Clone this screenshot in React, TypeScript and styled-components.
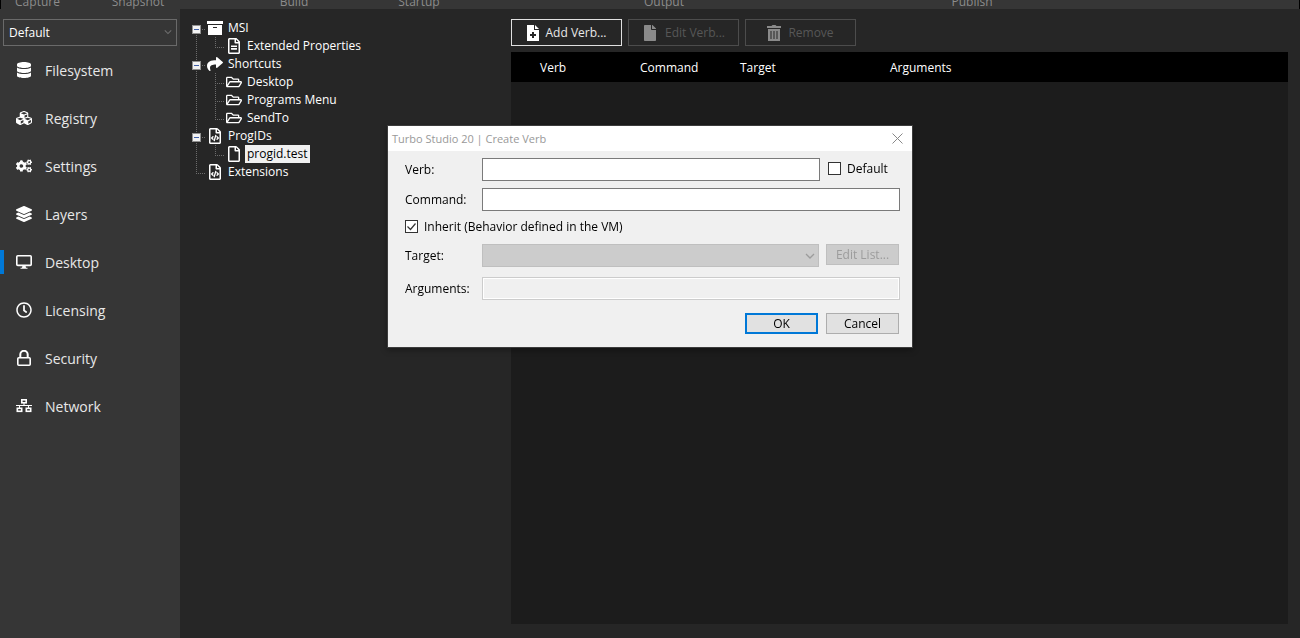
import React from "react";
import styled, { createGlobalStyle, css } from "styled-components";
import {
  FaCogs,
  FaCubes,
  FaDatabase,
  FaFile,
  FaLayerGroup,
  FaRegClock,
  FaRegFile,
  FaRegFileAlt,
  FaRegFileCode,
  FaRegFolderOpen,
  FaShare,
} from "react-icons/fa";

const Global = createGlobalStyle`
  *, *::before, *::after { box-sizing: border-box; }
  body {
    margin: 0;
    background: #262626;
    color: #fff;
    font: 12px/18px "Open Sans", "Noto Sans", sans-serif;
  }
  button, input, select { font: inherit; border-radius: 0; margin: 0; }
`;

/* ---------- icons ---------- */

const DesktopIcon = () => (
  <svg width="16" height="16" viewBox="0 0 16 16" fill="none" stroke="currentColor">
    <rect x="0.8" y="1.8" width="14.4" height="9.6" rx="1" strokeWidth="1.6" />
    <path d="M6.5 11.5h3l.5 2.2h1.5v1.1h-7v-1.1H6z" fill="currentColor" stroke="none" />
  </svg>
);

const LockIcon = () => (
  <svg width="16" height="16" viewBox="0 0 16 16" fill="none" stroke="currentColor" strokeWidth="1.6">
    <rect x="1.8" y="7.8" width="12.4" height="7.4" rx="1" />
    <path d="M4.3 7.5V4.5a3.7 3.7 0 0 1 7.4 0v3" strokeWidth="2" />
  </svg>
);

const NetworkIcon = () => (
  <svg width="16" height="16" viewBox="0 0 16 16" fill="none" stroke="currentColor">
    <rect x="5.8" y="1.8" width="4.4" height="3" strokeWidth="1.6" />
    <path d="M8 5v2.5M0 7.5h16M3.5 7.5V10M12.5 7.5V10" strokeWidth="1" />
    <rect x="1.3" y="10.3" width="4.4" height="3" strokeWidth="1.6" />
    <rect x="10.3" y="10.3" width="4.4" height="3" strokeWidth="1.6" />
  </svg>
);

const ArchiveIcon = () => (
  <svg width="16" height="16" viewBox="0 0 16 16" fill="currentColor">
    <path d="M0 1h16v3H0z" />
    <path d="M1 5h14v10H1zM6 7v1h4V7z" fillRule="evenodd" />
  </svg>
);

const FileAddIcon = () => (
  <svg width="12" height="16" viewBox="0 0 12 16" fill="currentColor">
    <path d="M0 0h7v5h5v11H0zM5 7v2H3v2h2v2h2v-2h2V9H7V7z" fillRule="evenodd" />
    <path d="M8 0l4 4H8z" />
  </svg>
);

const TrashIcon = () => (
  <svg width="14" height="16" viewBox="0 0 14 16" fill="currentColor">
    <path d="M0 1h4.500l1-1h3l1 1H14v2H0z" />
    <path d="M1 4h12v12H1zM3.500 6v8h1V6zM6.500 6v8h1V6zM9.500 6v8h1V6z" fillRule="evenodd" />
  </svg>
);

const ChevronIcon = ({ width }: { width: number }) => (
  <svg width={width} height={width} viewBox="0 0 10 10" fill="none" stroke="currentColor" strokeWidth="1.3">
    <path d="M1 3l4 4 4-4" />
  </svg>
);

/* ---------- page frame ---------- */

const Page = styled.div`
  display: flex;
  flex-direction: column;
  min-height: 100vh;
`;

const Ribbon = styled.header`
  display: flex;
  align-items: flex-end;
  height: 9px;
  overflow: hidden;
  background: #363636;
  border: solid #000;
  border-width: 0 1px;
  color: #8c8c8c;
  line-height: 14px;
`;

const RibbonGroup = styled.span<{ $width: number }>`
  flex: 0 0 ${(p) => p.$width}px;
  text-align: center;
`;

const Workspace = styled.div`
  flex: 1;
  display: flex;
`;

/* ---------- sidebar ---------- */

const Sidebar = styled.aside`
  flex: 0 0 180px;
  padding: 10px 3px 0;
  background: #363636;
`;

const SelectBox = styled.div<{ $inDialog?: boolean }>`
  position: relative;
  color: ${(p) => (p.$inDialog ? "#9c9c9c" : "#6e6e6e")};
  ${(p) => p.$inDialog && "flex: 1;"}

  select {
    display: block;
    width: 100%;
    height: ${(p) => (p.$inDialog ? 23 : 27)}px;
    padding: 0 20px 0 5px;
    appearance: none;
    background: ${(p) => (p.$inDialog ? "#ccc" : "transparent")};
    border: 1px solid ${(p) => (p.$inDialog ? "#bfbfbf" : "#6a6a6a")};
    color: #fff;
    opacity: 1;
  }

  svg {
    position: absolute;
    right: ${(p) => (p.$inDialog ? 4 : 5)}px;
    top: ${(p) => (p.$inDialog ? 7 : 9)}px;
    pointer-events: none;
  }
`;

const Nav = styled.nav`
  display: flex;
  flex-direction: column;
  margin: 0 -3px;
`;

const NavLink = styled.a<{ $active?: boolean }>`
  display: flex;
  align-items: center;
  gap: 13px;
  height: 24px;
  margin: 12px 0;
  padding-left: 12px;
  border-left: 4px solid ${(p) => (p.$active ? "#0078d7" : "transparent")};
  color: #e8e8e8;
  font-size: 14px;
  text-decoration: none;

  svg {
    flex: none;
    color: #fff;
  }
`;

const NavText = styled.span`
  padding-top: 2px;
`;

/* ---------- tree ---------- */

const Tree = styled.ul`
  flex: 0 0 331px;
  margin: 0;
  padding: 10px 0 0 7px;
  list-style: none;
`;

const TreeRow = styled.li`
  display: flex;
  height: 18px;
`;

type Line = "start" | "through" | "branch" | "end" | "none";

const dotsDown = "repeating-linear-gradient(to bottom, #6c6c6c 0 1px, transparent 1px 2px)";
const dotsAcross = "repeating-linear-gradient(to right, #6c6c6c 0 1px, transparent 1px 2px)";

const Guide = styled.span<{ $line: Line }>`
  flex: 0 0 19px;
  height: 18px;
  padding: 6px 0 0 5px;
  background-repeat: no-repeat;
  ${(p) =>
    p.$line !== "none" &&
    css`
      background-image: ${dotsDown}, ${p.$line === "through" ? "none" : dotsAcross};
      background-position: 9px ${p.$line === "start" ? 10 : 0}px, 9px 10px;
      background-size: 1px ${p.$line === "end" ? 10 : 18}px, 10px 1px;
    `}
`;

const Expander = styled.button`
  display: block;
  width: 9px;
  height: 9px;
  padding: 0;
  border: 1px solid #919191;
  background: linear-gradient(#3f5fa8, #3f5fa8) center / 5px 1px no-repeat, #f2f2f2;
`;

const TreeIcon = styled.span`
  display: flex;
  flex: 0 0 19px;
  align-items: center;
  padding-left: 1px;
`;

const TreeLabel = styled.span<{ $selected?: boolean }>`
  margin-left: 1px;
  padding: 0 2px;
  white-space: nowrap;
  ${(p) => p.$selected && "background: #f0f0f0; color: #000;"}
`;

/* ---------- verbs panel ---------- */

const Panel = styled.main`
  flex: 1;
  display: flex;
  flex-direction: column;
  padding: 10px 12px 14px 0;
`;

const Toolbar = styled.div`
  display: flex;
  gap: 6px;
  margin-bottom: 6px;
`;

const ToolButton = styled.button`
  display: flex;
  align-items: center;
  justify-content: center;
  gap: 7px;
  width: 111px;
  height: 27px;
  padding: 0;
  background: transparent;
  border: 1px solid #e0e0e0;
  color: #e8e8e8;
  white-space: nowrap;

  svg { color: #fff; }

  &:disabled {
    border-color: #4c4c4c;
    color: #575757;
    svg { color: #8a8a8a; }
  }
`;

const TableArea = styled.div`
  flex: 1;
  background: #1c1c1c;
`;

const VerbTable = styled.table`
  width: 100%;
  table-layout: fixed;
  border-collapse: collapse;
`;

const HeadCell = styled.th<{ $width?: number; $first?: boolean }>`
  ${(p) => p.$width && `width: ${p.$width}px;`}
  height: 30px;
  padding: 2px 0 0 ${(p) => (p.$first ? 29 : 4)}px;
  background: #000;
  font-weight: 400;
  text-align: left;
`;

/* ---------- dialog ---------- */

const Overlay = styled.div`
  position: fixed;
  inset: 0;
  display: flex;
  align-items: flex-start;
  justify-content: center;
  padding-top: 125px;
`;

const Dialog = styled.section`
  width: 526px;
  border: 1px solid #3c3c3c;
  background: #f0f0f0;
  color: #000;
  box-shadow: 0 2px 6px rgba(0, 0, 0, 0.35);
`;

const TitleBar = styled.header`
  display: flex;
  align-items: center;
  justify-content: space-between;
  height: 25px;
  padding: 0 9px 0 4px;
  background: #fff;
  color: #999;
`;

const Title = styled.h1`
  margin: 0;
  font-size: 11px;
  font-weight: 400;
`;

const CloseButton = styled.button`
  display: flex;
  padding: 0;
  border: 0;
  background: none;
  color: #888;
`;

const Form = styled.form`
  display: flex;
  flex-direction: column;
  padding: 7px 12px 13px 17px;
`;

const FormRow = styled.div<{ $after: number; $gap?: number; $inset?: boolean }>`
  display: flex;
  align-items: flex-start;
  gap: ${(p) => p.$gap ?? 0}px;
  margin-bottom: ${(p) => p.$after}px;
  ${(p) => p.$inset && "padding-right: 1px;"}
`;

const Field = styled.div`
  flex: 1;
  display: flex;
  align-items: center;
`;

const FieldLabel = styled.label`
  flex: 0 0 77px;
`;

const TextInput = styled.input`
  flex: 1;
  min-width: 0;
  height: 23px;
  padding: 0 3px;
  background: #fff;
  border: 1px solid #7a7a7a;

  &:disabled {
    background: #f0f0f0;
    border-color: #ccc;
    box-shadow: inset 0 0 0 1px #fff;
  }
`;

const CheckLabel = styled.label<{ $width?: number }>`
  display: flex;
  align-items: center;
  gap: 6px;
  height: ${(p) => (p.$width ? 21 : 19)}px;
  ${(p) => p.$width && `flex: 0 0 ${p.$width}px;`}
`;

const tick = `url("data:image/svg+xml,%3Csvg xmlns='http://www.w3.org/2000/svg' viewBox='0 0 11 11'%3E%3Cpath d='M1.500 5.500l3 3 5-6' fill='none' stroke='%23333' stroke-width='1.200'/%3E%3C/svg%3E")`;

const CheckBox = styled.input`
  flex: none;
  width: 13px;
  height: 13px;
  appearance: none;
  background: #fff;
  border: 1px solid #333;

  &:checked { background-image: ${tick}; }
`;

const DialogButton = styled.button<{ $default?: boolean }>`
  flex: 0 0 73px;
  height: 21px;
  padding: 0;
  line-height: 17px;
  background: #e1e1e1;
  border: ${(p) => (p.$default ? "2px solid #0078d7" : "1px solid #adadad")};
  color: #000;

  &:disabled {
    background: #ccc;
    border-color: #bfbfbf;
    color: #9c9c9c;
  }
`;

const Actions = styled.div`
  display: flex;
  justify-content: flex-end;
  gap: 8px;
  padding-right: 1px;
`;

/* ---------- data ---------- */

const ribbonGroups: [string, number][] = [
  ["Capture", 73],
  ["Snapshot", 128],
  ["Build", 184],
  ["Startup", 66],
  ["Output", 424],
  ["Publish", 192],
];

const navItems = [
  { label: "Filesystem", icon: <FaDatabase size={16} /> },
  { label: "Registry", icon: <FaCubes size={16} /> },
  { label: "Settings", icon: <FaCogs size={16} /> },
  { label: "Layers", icon: <FaLayerGroup size={16} /> },
  { label: "Desktop", icon: <DesktopIcon />, active: true },
  { label: "Licensing", icon: <FaRegClock size={16} /> },
  { label: "Security", icon: <LockIcon /> },
  { label: "Network", icon: <NetworkIcon /> },
];

type TreeItem = {
  label: string;
  icon: React.ReactNode;
  guides: Line[];
  open?: boolean;
  selected?: boolean;
};

const treeItems: TreeItem[] = [
  { label: "MSI", icon: <ArchiveIcon />, guides: ["start"], open: true },
  { label: "Extended Properties", icon: <FaRegFileAlt size={16} />, guides: ["through", "end"] },
  { label: "Shortcuts", icon: <FaShare size={16} />, guides: ["branch"], open: true },
  { label: "Desktop", icon: <FaRegFolderOpen size={16} />, guides: ["through", "branch"] },
  { label: "Programs Menu", icon: <FaRegFolderOpen size={16} />, guides: ["through", "branch"] },
  { label: "SendTo", icon: <FaRegFolderOpen size={16} />, guides: ["through", "end"] },
  { label: "ProgIDs", icon: <FaRegFileCode size={16} />, guides: ["branch"], open: true },
  { label: "progid.test", icon: <FaRegFile size={16} />, guides: ["through", "end"], selected: true },
  { label: "Extensions", icon: <FaRegFileCode size={16} />, guides: ["end"] },
];

export default function App() {
  return (
    <Page>
      <Global />
      <Ribbon>
        {ribbonGroups.map(([name, width]) => (
          <RibbonGroup key={name} $width={width}>{name}</RibbonGroup>
        ))}
      </Ribbon>

      <Workspace>
        <Sidebar>
          <SelectBox>
            <select aria-label="Layer" defaultValue="Default">
              <option>Default</option>
            </select>
            <ChevronIcon width={8} />
          </SelectBox>
          <Nav>
            {navItems.map((item) => (
              <NavLink key={item.label} href="#" $active={item.active}>
                {item.icon}
                <NavText>{item.label}</NavText>
              </NavLink>
            ))}
          </Nav>
        </Sidebar>

        <Tree>
          {treeItems.map((item) => (
            <TreeRow key={item.label}>
              {item.guides.map((line, i) => (
                <Guide key={i} $line={line}>
                  {item.open && <Expander aria-label={`Collapse ${item.label}`} />}
                </Guide>
              ))}
              <TreeIcon>{item.icon}</TreeIcon>
              <TreeLabel $selected={item.selected}>{item.label}</TreeLabel>
            </TreeRow>
          ))}
        </Tree>

        <Panel>
          <Toolbar>
            <ToolButton><FileAddIcon />Add Verb...</ToolButton>
            <ToolButton disabled><FaFile size={16} />Edit Verb...</ToolButton>
            <ToolButton disabled><TrashIcon />Remove</ToolButton>
          </Toolbar>
          <TableArea>
            <VerbTable>
              <thead>
                <tr>
                  <HeadCell $width={125} $first>Verb</HeadCell>
                  <HeadCell $width={100}>Command</HeadCell>
                  <HeadCell $width={150}>Target</HeadCell>
                  <HeadCell>Arguments</HeadCell>
                </tr>
              </thead>
            </VerbTable>
          </TableArea>
        </Panel>
      </Workspace>

      <Overlay>
        <Dialog role="dialog" aria-labelledby="dialog-title">
          <TitleBar>
            <Title id="dialog-title">Turbo Studio 20 | Create Verb</Title>
            <CloseButton aria-label="Close">
              <svg width="11" height="11" viewBox="0 0 11 11" stroke="currentColor">
                <path d="M0.500 0.500l10 10M10.500 0.500l-10 10" />
              </svg>
            </CloseButton>
          </TitleBar>
          <Form onSubmit={(e) => e.preventDefault()}>
            <FormRow $after={7} $gap={8}>
              <Field>
                <FieldLabel htmlFor="verb">Verb:</FieldLabel>
                <TextInput id="verb" />
              </Field>
              <CheckLabel $width={72}>
                <CheckBox type="checkbox" />
                Default
              </CheckLabel>
            </FormRow>
            <FormRow $after={6}>
              <Field>
                <FieldLabel htmlFor="command">Command:</FieldLabel>
                <TextInput id="command" />
              </Field>
            </FormRow>
            <FormRow $after={8}>
              <CheckLabel>
                <CheckBox type="checkbox" defaultChecked />
                Inherit (Behavior defined in the VM)
              </CheckLabel>
            </FormRow>
            <FormRow $after={10} $gap={7} $inset>
              <Field>
                <FieldLabel htmlFor="target">Target:</FieldLabel>
                <SelectBox $inDialog>
                  <select id="target" disabled />
                  <ChevronIcon width={10} />
                </SelectBox>
              </Field>
              <DialogButton type="button" disabled>Edit List...</DialogButton>
            </FormRow>
            <FormRow $after={13}>
              <Field>
                <FieldLabel htmlFor="arguments">Arguments:</FieldLabel>
                <TextInput id="arguments" disabled />
              </Field>
            </FormRow>
            <Actions>
              <DialogButton $default>OK</DialogButton>
              <DialogButton type="button">Cancel</DialogButton>
            </Actions>
          </Form>
        </Dialog>
      </Overlay>
    </Page>
  );
}
